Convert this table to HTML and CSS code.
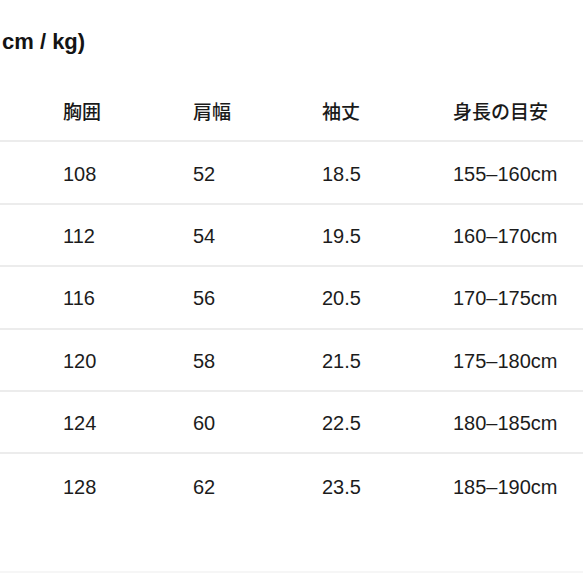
FILE: index.html
```html
<!DOCTYPE html>
<html lang="ja">
<head>
<meta charset="utf-8">
<link rel="stylesheet" href="styles.css">
</head>
<body>
<div class="page">
  <div class="title">cm / kg)</div>
  <div class="table">
    <div class="row head">
      <div class="cell">胸囲</div>
      <div class="cell">肩幅</div>
      <div class="cell">袖丈</div>
      <div class="cell">身長の目安</div>
    </div>
    <div class="row">
      <div class="cell">108</div><div class="cell">52</div><div class="cell">18.5</div><div class="cell">155–160cm</div>
    </div>
    <div class="row">
      <div class="cell">112</div><div class="cell">54</div><div class="cell">19.5</div><div class="cell">160–170cm</div>
    </div>
    <div class="row">
      <div class="cell">116</div><div class="cell">56</div><div class="cell">20.5</div><div class="cell">170–175cm</div>
    </div>
    <div class="row">
      <div class="cell">120</div><div class="cell">58</div><div class="cell">21.5</div><div class="cell">175–180cm</div>
    </div>
    <div class="row">
      <div class="cell">124</div><div class="cell">60</div><div class="cell">22.5</div><div class="cell">180–185cm</div>
    </div>
    <div class="row last">
      <div class="cell">128</div><div class="cell">62</div><div class="cell">23.5</div><div class="cell">185–190cm</div>
    </div>
  </div>
  <div class="footer-line"></div>
</div>
</body>
</html>
```
FILE: styles.css
```css
html, body {
  margin: 0;
  padding: 0;
  background: #ffffff;
}
body {
  font-family: "Liberation Sans", "Noto Sans CJK JP", sans-serif;
  color: #1c1c1c;
  width: 583px;
  height: 583px;
  overflow: hidden;
}
.page {
  display: flex;
  flex-direction: column;
}
.title {
  height: 80px;
  box-sizing: border-box;
  padding-top: 28px;
  padding-left: 2px;
  font-size: 22px;
  font-weight: bold;
  line-height: 28px;
  color: #141414;
}
.table {
  display: flex;
  flex-direction: column;
}
.row {
  display: grid;
  grid-template-columns: 130px 129px 131px 1fr;
  padding-left: 63px;
  height: 62.4px;
  box-sizing: border-box;
  border-bottom: 2px solid #ececec;
  align-items: center;
  font-size: 20px;
  padding-top: 3px;
}
.row.head {
  font-family: "Noto Sans CJK JP", sans-serif;
  font-size: 19px;
  font-weight: 500;
  padding-top: 0;
  color: #1a1a1a;
}
.row.last {
  border-bottom: none;
}
.footer-line {
  margin-top: 54px;
  height: 2px;
  background: #f6f6f6;
}
```
